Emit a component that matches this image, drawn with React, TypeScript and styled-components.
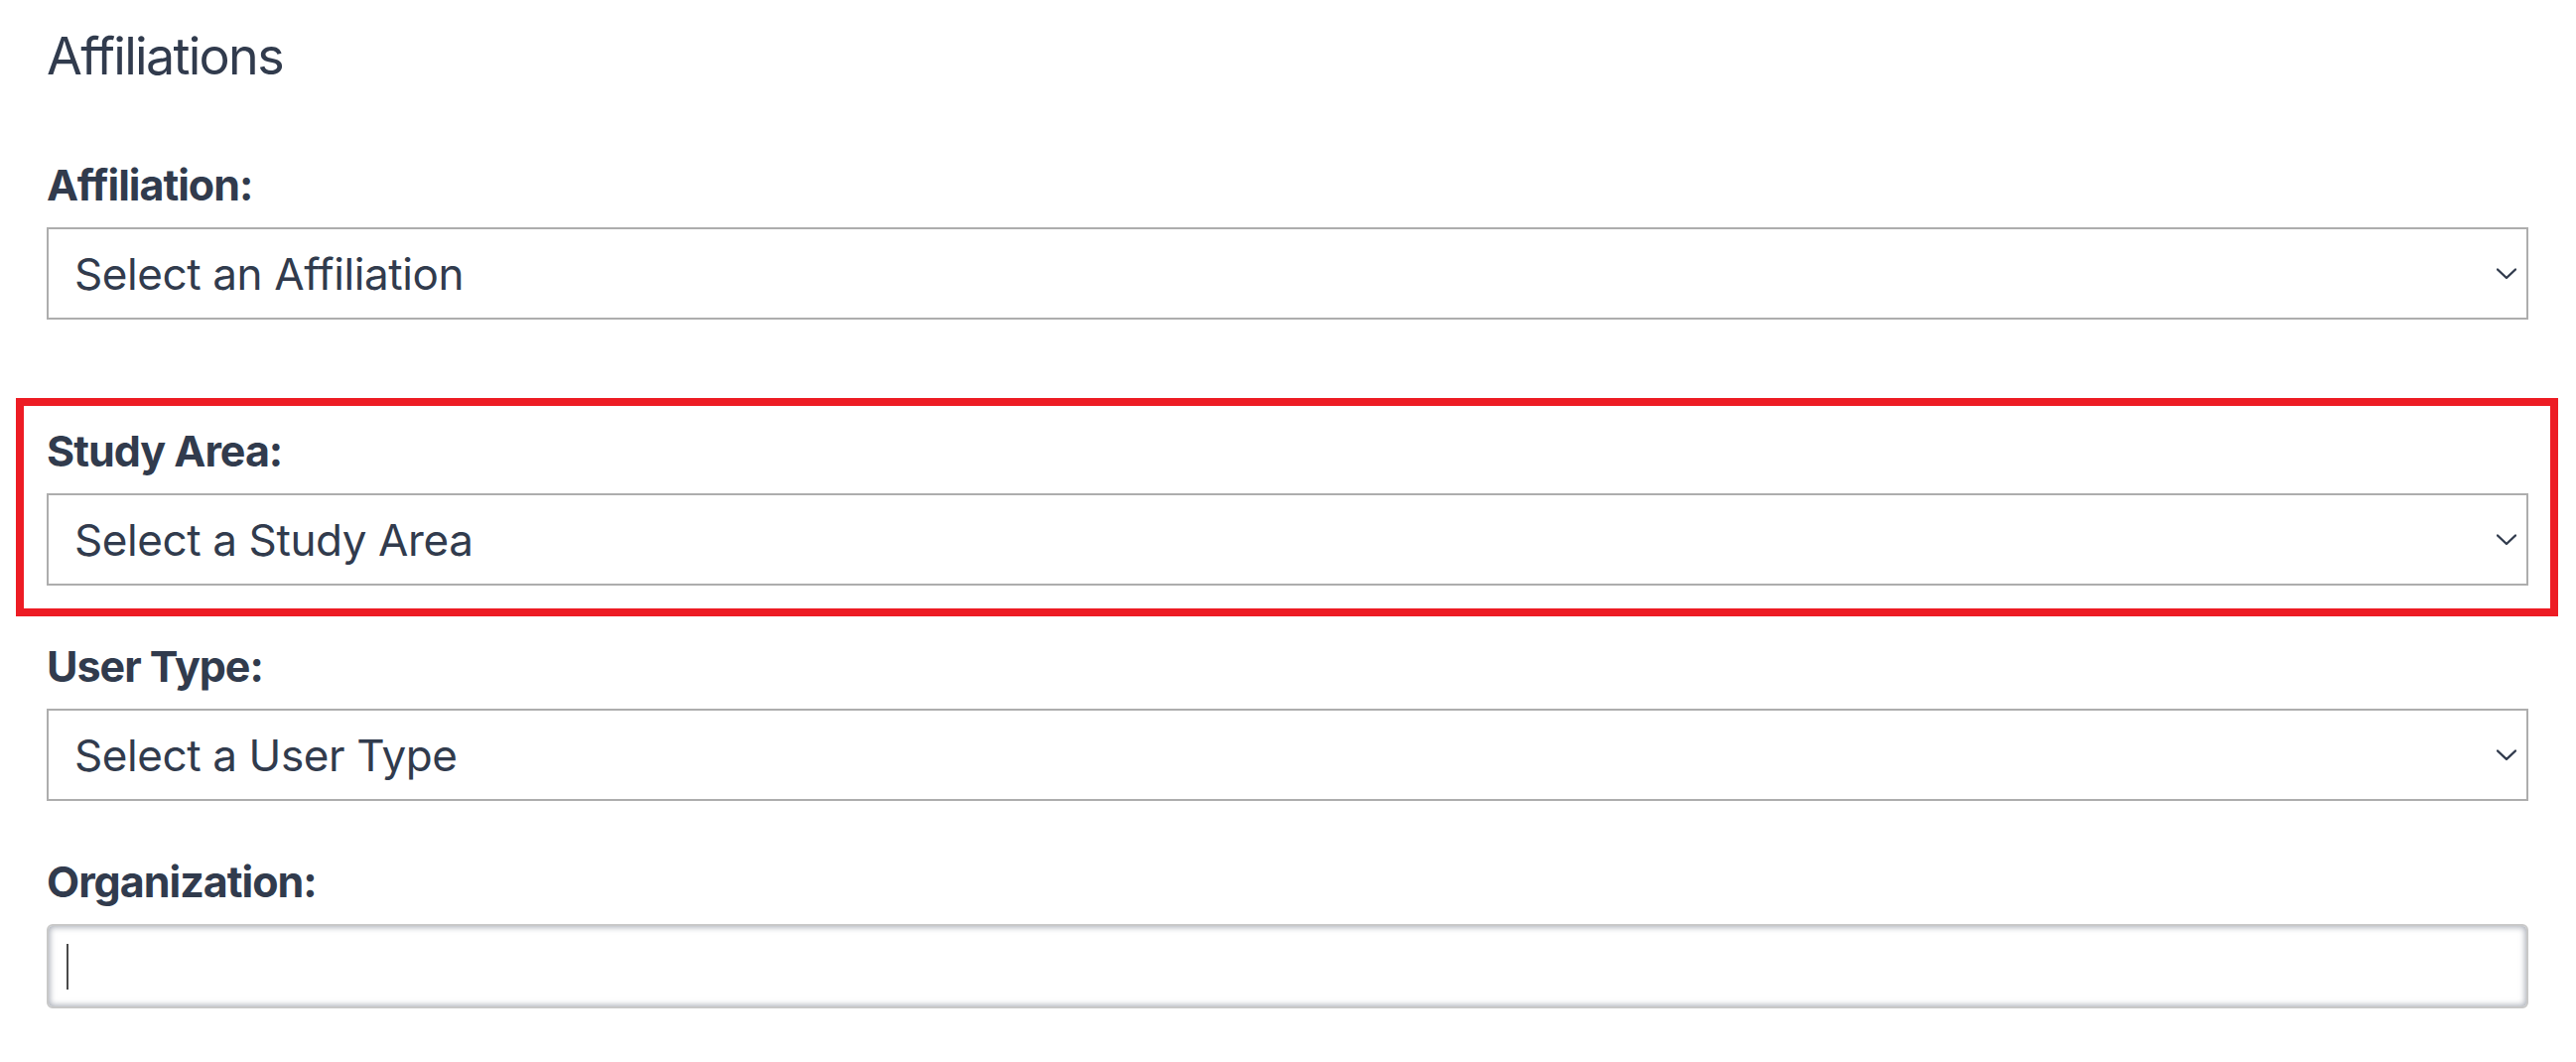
import React from 'react';
import styled, { createGlobalStyle } from 'styled-components';

const GlobalStyle = createGlobalStyle`
    html, body {
        margin: 0;
        padding: 0;
        background: #ffffff;
    }
    body {
        font-family: Inter, "Noto Sans", sans-serif;
        color: #313b4d;
    }
`;

const Page = styled.div`
    padding: 25px 48px 0 47px;
`;

const Heading = styled.h2`
    margin: 0 0 72px;
    font-size: 52px;
    font-weight: 400;
    line-height: 63px;
    letter-spacing: -1.7px;
    white-space: nowrap;
`;

const Form = styled.form`
    display: flex;
    flex-direction: column;
`;

const Field = styled.div<{ $after: number; $highlight?: boolean }>`
    position: relative;
    margin-bottom: ${(p) => p.$after}px;

    ${(p) =>
        p.$highlight &&
        `
        &::after {
            content: '';
            position: absolute;
            top: -27px;
            left: -31px;
            right: -30px;
            bottom: -31px;
            border: 8px solid #ed1c24;
            pointer-events: none;
        }
    `}
`;

const Label = styled.label`
    display: block;
    margin-bottom: 17px;
    font-size: 43px;
    font-weight: 700;
    line-height: 52px;
    letter-spacing: -1px;
    white-space: nowrap;
`;

const SelectBox = styled.div`
    box-sizing: border-box;
    display: flex;
    align-items: center;
    justify-content: space-between;
    height: 93px;
    padding: 0 10px 0 26px;
    border: 2px solid #adadad;
    background: #ffffff;
    cursor: pointer;
`;

const SelectValue = styled.span`
    font-size: 44px;
    font-weight: 400;
    line-height: 1;
    letter-spacing: -0.4px;
    white-space: nowrap;
`;

const Chevron = styled.svg`
    width: 20px;
    height: 12px;
    flex: none;
`;

const InputWrap = styled.div`
    position: relative;
`;

const TextInput = styled.input`
    box-sizing: border-box;
    display: block;
    width: 100%;
    height: 85px;
    padding: 0 18px;
    border: 2px solid #c8c8c8;
    border-radius: 6px;
    background: #ffffff;
    box-shadow: inset 0 0 6px 1px rgba(100, 108, 125, 0.6);
    font-family: Inter, sans-serif;
    font-size: 44px;
    color: #313b4d;
    outline: none;
`;

const Caret = styled.span`
    position: absolute;
    left: 20px;
    top: 20px;
    width: 2px;
    height: 46px;
    background: #4a4a4a;
`;

const ChevronIcon: React.FC = () => (
    <Chevron viewBox="0 0 20 12" fill="none">
        <path d="M1 1.5 L10 10 L19 1.5" stroke="#313b4d" strokeWidth="2.4" strokeLinecap="round" strokeLinejoin="round" />
    </Chevron>
);

type SelectFieldProps = {
    label: string;
    placeholder: string;
    after: number;
    highlight?: boolean;
};

const SelectField: React.FC<SelectFieldProps> = ({ label, placeholder, after, highlight }) => (
    <Field $after={after} $highlight={highlight}>
        <Label>{label}</Label>
        <SelectBox role="combobox" aria-label={label}>
            <SelectValue>{placeholder}</SelectValue>
            <ChevronIcon />
        </SelectBox>
    </Field>
);

const App: React.FC = () => {
    return (
        <>
            <GlobalStyle />
            <Page>
                <Heading>Affiliations</Heading>
                <Form onSubmit={(e) => e.preventDefault()}>
                    <SelectField label="Affiliation:" placeholder="Select an Affiliation" after={106} />
                    <SelectField label="Study Area:" placeholder="Select a Study Area" after={55} highlight />
                    <SelectField label="User Type:" placeholder="Select a User Type" after={55} />
                    <Field $after={0}>
                        <Label htmlFor="organization">Organization:</Label>
                        <InputWrap>
                            <TextInput id="organization" type="text" />
                            <Caret />
                        </InputWrap>
                    </Field>
                </Form>
            </Page>
        </>
    );
};

export default App;
